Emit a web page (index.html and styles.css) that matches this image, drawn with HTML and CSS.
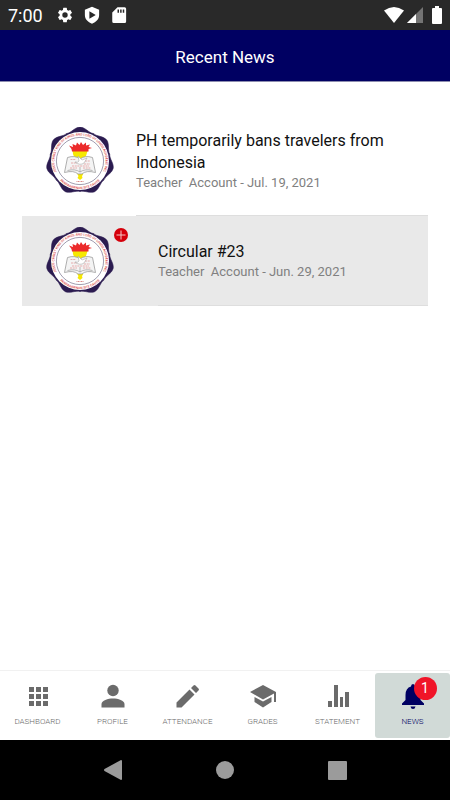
FILE: index.html
```html
<!DOCTYPE html>
<html lang="en">
<head>
  <meta charset="utf-8">
  <meta name="viewport" content="width=device-width, initial-scale=1">
  <title>Recent News</title>
  <link rel="stylesheet" href="styles.css">
</head>
<body>
  <svg class="defs" aria-hidden="true">
    <defs>
      <path id="lobe" d="M0 0L-13.2-27.500C-9-28-5-34 0-34S9-28 13.2-27.500Z"/>
      <path id="ring" d="M-18.900 17.300A25.600 25.600 0 1 1 18.900 17.300"/>
      <path id="ringBottom" d="M-20 19.600A28 28 0 0 0 20 19.600"/>
      <symbol id="seal" viewBox="-34 -34 68 68">
        <g fill="#2b1b50" stroke="#2b1b50" stroke-width=".5">
          <use href="#lobe"/>
          <use href="#lobe" transform="rotate(51.43)"/>
          <use href="#lobe" transform="rotate(102.86)"/>
          <use href="#lobe" transform="rotate(154.29)"/>
          <use href="#lobe" transform="rotate(205.71)"/>
          <use href="#lobe" transform="rotate(257.14)"/>
          <use href="#lobe" transform="rotate(308.57)"/>
        </g>
        <circle r="29" fill="#fff"/>
        <circle r="23.600" fill="none" stroke="#77718c" stroke-width=".7"/>
        <g class="seal-text">
          <text text-anchor="middle"><textPath href="#ring" startOffset="50%">JESUS CHRIST KING OF KINGS AND LORD OF LORDS ACADEMY, INC.</textPath></text>
          <text text-anchor="middle"><textPath href="#ringBottom" startOffset="50%">PANDARAWNAN SITE CAVITE</textPath></text>
        </g>
        <path fill="#f6e800" d="M-7.500-11.500H8L6-5C5-3 3-2.500 3 0V13.500L2 15 2.500 17 0 19-2.500 17-1.500 15-2.500 13.500V0C-3-2.500-6-3-7-7Z"/>
        <path fill="#ec2b2b" d="M-8-9.500L-8.500-12-11-15.500-7-14-7.500-17-4-15.500-3-18.500-.5-16 1-19 3-16 6-18.500 6-15.500 10-16.500 8.500-14 12-13 8.500-12V-9.500Z"/>
        <path fill="#f4f4f4" stroke="#9b9b9b" stroke-width=".8" d="M-12.500-3.500Q-5-6 0-2Q5-6 12.500-3.500L15.500 11.500Q6 9 2 13H-2Q-6 9-15.500 11.500Z"/>
        <path fill="none" stroke="#8c8c8c" stroke-width=".6" d="M-12.500 9.500Q-5 7.500 0 11Q5 7.500 12.500 9.500M0 6V11"/>
        <path fill="none" stroke="#df8d8d" stroke-width=".7" stroke-dasharray="2 .7" d="M-9.500-1.500H-4M5 0H10M-9 2H-3M4 3H10M-8 5H9M-10 7H-3M3 7H11"/>
        <path fill="#fff" stroke="#aaa" stroke-width=".6" d="M-5 1Q-2 2-1 0L-2-5 2-1 7-3 4 2Q0 5-5 1Z"/>
        <path stroke="#d98888" stroke-width="1" stroke-dasharray="1 .5" d="M-3.500 20.500H4"/>
      </symbol>
    </defs>
  </svg>

  <div class="status-bar">
    <span class="time">7:00</span>
    <svg class="status-icon" viewBox="0 0 24 24"><path d="M19.140 12.940c.04-.3.06-.61.06-.94s-.02-.64-.07-.94l2.030-1.580a.49.49 0 0 0 .12-.61l-1.920-3.320a.49.49 0 0 0-.59-.22l-2.390.96a7 7 0 0 0-1.620-.94l-.36-2.540A.48.48 0 0 0 13.920 2.400h-3.840a.48.48 0 0 0-.48.41l-.36 2.540a7 7 0 0 0-1.620.94l-2.390-.96a.49.49 0 0 0-.59.22L2.720 8.870a.49.49 0 0 0 .12.61l2.030 1.580a7 7 0 0 0 0 1.880l-2.030 1.580a.49.49 0 0 0-.12.61l1.920 3.320c.12.22.37.29.59.22l2.390-.96c.5.380 1.030.7 1.620.94l.36 2.540c.05.240.24.410.48.410h3.840c.24 0 .44-.17.48-.41l.36-2.540a7 7 0 0 0 1.620-.94l2.390.96c.22.080.47 0 .59-.22l1.920-3.320a.49.49 0 0 0-.12-.61ZM12 15.600a3.600 3.600 0 1 1 0-7.200 3.600 3.600 0 0 1 0 7.200Z"/></svg>
    <svg class="status-icon" viewBox="0 0 24 24"><path fill-rule="evenodd" d="M12 1L21.500 5V12C21.500 17.500 17.500 21.500 12 23.500 6.500 21.500 2.500 17.500 2.500 12V5ZM8.500 7V17L17 12Z"/></svg>
    <svg class="status-icon" viewBox="0 0 24 24"><path fill-rule="evenodd" d="M10 1.500H19.500Q21.500 1.500 21.500 3.500V20.500Q21.500 22.500 19.500 22.500H5Q3 22.500 3 20.500V8.500ZM10 4.500V9H12V4.500ZM13.500 4.500V9H15.500V4.500ZM17 4.500V9H19V4.500Z"/></svg>
    <div class="signals">
      <svg width="20" height="16" viewBox="0 0 20 16"><path d="M0 3.500Q10-3.500 20 3.500L10 16Z"/></svg>
      <svg width="16" height="16" viewBox="0 0 16 16"><path fill="#747474" d="M16 0V16H0Z"/><path d="M9 7V16H0Z"/></svg>
      <svg class="battery" width="10" height="18" viewBox="0 0 10 18"><path d="M3 0H7V2H9Q10 2 10 3V17Q10 18 9 18H1Q0 18 0 17V3Q0 2 1 2H3Z"/></svg>
    </div>
  </div>

  <header>
    <h1>Recent News</h1>
  </header>

  <main>
    <ul class="news-list">
      <li>
        <a class="news-item" href="#">
          <svg class="logo"><use href="#seal"/></svg>
          <div class="news-text">
            <h2>PH temporarily bans travelers from Indonesia</h2>
            <p>Teacher  Account - Jul. 19, 2021</p>
          </div>
        </a>
      </li>
      <li>
        <a class="news-item unread" href="#">
          <svg class="logo"><use href="#seal"/></svg>
          <svg class="new-mark" viewBox="0 0 14 14"><circle cx="7" cy="7" r="7" fill="#d5000b"/><path d="M7 2.500V11.500M2.500 7H11.500" stroke="#f5c9c9"/></svg>
          <div class="news-text">
            <h2>Circular #23</h2>
            <p>Teacher  Account - Jun. 29, 2021</p>
          </div>
        </a>
      </li>
    </ul>
  </main>

  <nav class="tabs">
    <a href="#">
      <svg viewBox="0 0 28 28"><path d="M5 5h5v5H5zM12 5h5v5h-5zM19 5h5v5h-5zM5 12h5v5H5zM12 12h5v5h-5zM19 12h5v5h-5zM5 19h5v5H5zM12 19h5v5h-5zM19 19h5v5h-5z"/></svg>
      <span>DASHBOARD</span>
    </a>
    <a href="#">
      <svg viewBox="0 0 28 28"><circle cx="14" cy="8.500" r="5.700"/><path d="M2.500 25.500V22C2.500 18.500 9 16.500 14 16.500S25.500 18.500 25.500 22V25.500Z"/></svg>
      <span>PROFILE</span>
    </a>
    <a href="#">
      <svg viewBox="0 0 28 28"><path d="M2.500 20.500L15.500 7.500 20.500 12.500 7.500 25.500H2.500ZM17 6L19.500 3.500Q20.500 2.500 21.500 3.500L24.500 6.500Q25.500 7.500 24.500 8.500L22 11Z"/></svg>
      <span>ATTENDANCE</span>
    </a>
    <a href="#">
      <svg viewBox="0 0 28 28"><path d="M14 3L27 10V20H25V11.500L14 17.500 1 10ZM5.500 15L14 19.500 22.500 15V20L14 25.500 5.500 20Z"/></svg>
      <span>GRADES</span>
    </a>
    <a href="#">
      <svg viewBox="0 0 28 28"><path d="M4 19h4v6H4zM10 3h4v22h-4zM16 15h3v10h-3zM21 10h4v15h-4z"/></svg>
      <span>STATEMENT</span>
    </a>
    <a class="active" href="#">
      <svg viewBox="0 0 28 28"><path d="M14 2Q16 2 16 4.500Q21.500 6 21.500 13V18L25 21.500V23H3V21.500L6.500 18V13Q6.500 6 12 4.500Q12 2 14 2ZM11.500 24.500H16.500Q16 27 14 27T11.500 24.500Z"/></svg>
      <span>NEWS</span>
      <b class="count">1</b>
    </a>
  </nav>

  <div class="system-nav">
    <button aria-label="Back"><svg width="18" height="20" viewBox="0 0 18 20"><path d="M17 0Q18 0 18 1V19Q18 20 17 20L.5 11Q-.5 10 .5 9Z"/></svg></button>
    <button aria-label="Home"><svg width="18" height="18" viewBox="0 0 18 18"><circle cx="9" cy="9" r="9"/></svg></button>
    <button aria-label="Overview"><svg width="19" height="19" viewBox="0 0 19 19"><rect width="19" height="19" rx="1"/></svg></button>
  </div>
</body>
</html>
```

FILE: styles.css
```css
* {
  box-sizing: border-box;
  margin: 0;
  padding: 0;
}
body {
  display: flex;
  flex-direction: column;
  min-height: 100vh;
  background-color: #fff;
  font-family: Roboto, sans-serif;
}
a {
  color: inherit;
  text-decoration: none;
}
svg {
  display: block;
  flex-shrink: 0;
}
.defs {
  position: absolute;
  width: 0;
  height: 0;
}
.status-bar {
  display: flex;
  align-items: center;
  gap: 9px;
  height: 30px;
  padding: 0 8px;
  background-color: #292929;
  color: #fff;
  fill: #fff;
}
.time {
  margin-right: 4px;
  font-size: 18px;
}
.status-icon {
  width: 18px;
  height: 18px;
}
.signals {
  display: flex;
  align-items: center;
  gap: 3px;
  margin-left: auto;
}
.battery {
  margin-left: 6px;
}
header {
  height: 52px;
  background-color: #000062;
  border-bottom: 1px solid #8d8daf;
  color: #fff;
  text-align: center;
}
h1 {
  font-size: 17px;
  font-weight: 400;
  line-height: 54px;
}
main {
  flex: 1;
  padding: 24px 22px;
}
.news-list {
  list-style: none;
}
.news-item {
  display: flex;
  align-items: center;
  min-height: 90px;
  padding-left: 24px;
}
.news-list li:first-child .news-item {
  min-height: 110px;
}
.unread {
  background-color: #e9e9e9;
}
.logo {
  width: 68px;
  height: 68px;
}
.seal-text {
  fill: #d94848;
  font-family: Roboto, sans-serif;
  font-size: 3.3px;
  font-weight: 500;
}
.new-mark {
  align-self: flex-start;
  width: 14px;
  height: 14px;
  margin: 12px 8px 0 0;
}
.news-text {
  display: flex;
  flex: 1;
  flex-direction: column;
  justify-content: center;
  align-self: stretch;
  margin-left: 22px;
  border-bottom: 1px solid #dedede;
}
.news-text h2 {
  color: #111;
  font-size: 16px;
  font-weight: 400;
  line-height: 22px;
}
.news-text p {
  color: #808080;
  font-size: 13px;
  line-height: 18px;
  white-space: pre-wrap;
}
.tabs {
  display: grid;
  grid-template-columns: repeat(6, 1fr);
  height: 70px;
  padding: 2px 0;
  border-top: 1px solid #f1f1f1;
}
.tabs a {
  position: relative;
  display: flex;
  flex-direction: column;
  align-items: center;
  gap: 5px;
  padding-top: 9px;
  border-radius: 3px;
  color: #6b6b6b;
  fill: #6b6b6b;
  font-size: 8px;
  font-weight: 300;
  line-height: 14px;
}
.tabs svg {
  width: 28px;
  height: 28px;
}
.tabs .active {
  background-color: #d1dad7;
  color: #000062;
  fill: #000062;
}
.count {
  position: absolute;
  top: 4px;
  left: calc(50% + 1px);
  width: 23px;
  height: 23px;
  border-radius: 50%;
  background-color: #f01428;
  color: #fff;
  font-size: 14px;
  font-weight: 400;
  line-height: 23px;
  text-align: center;
}
.system-nav {
  display: flex;
  justify-content: center;
  height: 60px;
  background-color: #000;
}
.system-nav button {
  display: flex;
  align-items: center;
  justify-content: center;
  width: 25%;
  border: none;
  background: none;
  fill: #9b9b9b;
}
```
